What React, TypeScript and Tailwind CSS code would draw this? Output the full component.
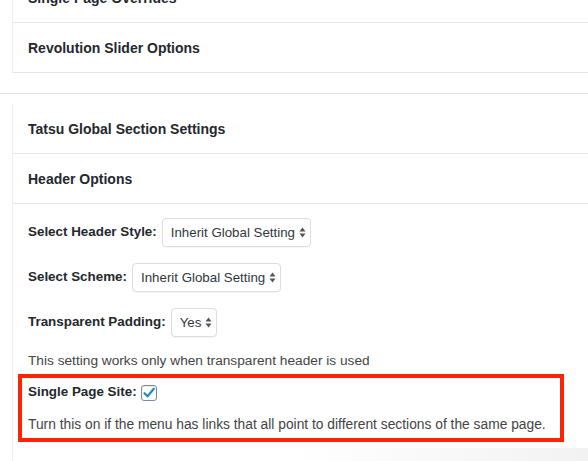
import React from 'react';

const Row: React.FC<{ title: string }> = ({ title }) => (
  <div className="h-[50px] flex items-center pl-[15px] pt-[2px] border-b border-[#e5e5e5] text-[14px] font-bold text-[#23282d]">
    {title}
  </div>
);

const Arrows: React.FC = () => (
  <svg width="7" height="11" viewBox="0 0 7 11" className="ml-[4px] shrink-0">
    <path d="M3.5 0.5 L6.5 4.5 L0.5 4.5 Z" fill="#555" />
    <path d="M3.5 10.5 L6.5 6.5 L0.5 6.5 Z" fill="#555" />
  </svg>
);

const FakeSelect: React.FC<{ value: string }> = ({ value }) => (
  <div className="h-[29px] flex items-center pl-[8px] pr-[4px] border border-[#dddddd] rounded-[4px] bg-white shadow-[0_1px_1px_rgba(0,0,0,0.04)] text-[13.3px] text-[#32373c]">
    <span>{value}</span>
    <Arrows />
  </div>
);

const Field: React.FC<{ label: string; value: string }> = ({ label, value }) => (
  <div className="flex items-center gap-[5px] h-[29px] mb-[16px]">
    <span className="text-[13.4px] font-bold text-[#23282d]">{label}</span>
    <FakeSelect value={value} />
  </div>
);

export default function App() {
  return (
    <div className="min-h-screen bg-white overflow-hidden font-['Liberation_Sans',Arial,sans-serif] text-[#23282d]">
      <div className="ml-3 border-l border-[#efefef] -mt-[27px]">
        <Row title="Single Page Overrides" />
        <Row title="Revolution Slider Options" />
      </div>
      <div className="h-[20px]" />
      <div className="border-t border-[#e2e2e2] pt-[10px]">
        <div className="ml-3 border-l border-[#efefef]">
          <Row title="Tatsu Global Section Settings" />
          <Row title="Header Options" />
          <div className="pl-[15px] pt-[14px]">
            <Field label="Select Header Style:" value="Inherit Global Setting" />
            <Field label="Select Scheme:" value="Inherit Global Setting" />
            <Field label="Transparent Padding:" value="Yes" />
            <p className="-mt-px text-[13.7px] leading-[18px] text-[#444]">
              This setting works only when transparent header is used
            </p>
            <div className="mt-[4px] -ml-[10px] w-[546px] border-[4px] border-[#ff2200] pl-[6px] pt-[6px] pb-[4px]">
              <div className="flex items-center gap-[4px] h-[17px]">
                <span className="text-[13.4px] font-bold text-[#23282d]">Single Page Site:</span>
                <span className="w-[16px] h-[16px] border border-[#7e8993] rounded-[3px] bg-white flex items-center justify-center shadow-[inset_0_1px_2px_rgba(0,0,0,0.1)]">
                  <svg width="14" height="14" viewBox="0 0 14 14">
                    <path d="M2.5 7.2 L5.6 10.3 L11.8 2.8" fill="none" stroke="#1e8cbe" strokeWidth="2.2" strokeLinecap="round" strokeLinejoin="round" />
                  </svg>
                </span>
              </div>
              <p className="mt-[15px] text-[13.8px] leading-[18px] text-[#444]">
                Turn this on if the menu has links that all point to different sections of the same page.
              </p>
            </div>
            <div className="mt-[6px] ml-[265px] h-[14px] bg-gradient-to-r from-transparent to-[#f2f2f2]" />
          </div>
        </div>
      </div>
    </div>
  );
}
